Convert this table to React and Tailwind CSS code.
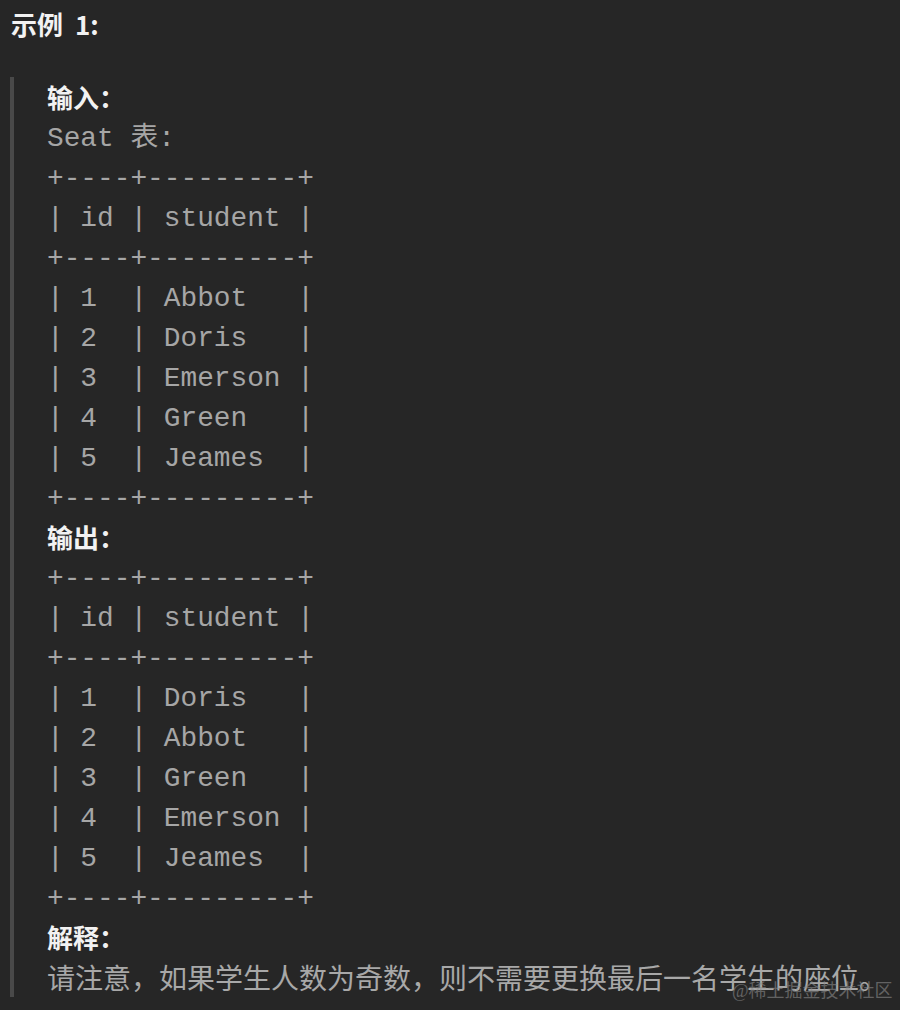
import React from "react";

const input = [
  "+----+---------+",
  "| id | student |",
  "+----+---------+",
  "| 1  | Abbot   |",
  "| 2  | Doris   |",
  "| 3  | Emerson |",
  "| 4  | Green   |",
  "| 5  | Jeames  |",
  "+----+---------+",
];
const output = [
  "+----+---------+",
  "| id | student |",
  "+----+---------+",
  "| 1  | Doris   |",
  "| 2  | Abbot   |",
  "| 3  | Green   |",
  "| 4  | Emerson |",
  "| 5  | Jeames  |",
  "+----+---------+",
];

const mono = "font-['Liberation_Mono','Noto_Sans_CJK_SC',monospace] text-[27.8px] text-[#a6a6a6] whitespace-pre h-10 pt-[3px] leading-[37px]";
const label = "font-['Noto_Sans_CJK_SC',sans-serif] font-bold text-[26px] text-[#f2f2f2] h-10 leading-10";

function Line({ t }) {
  return <div className={mono}>{t}</div>;
}

export default function App() {
  return (
    <div className="relative w-[900px] h-[1010px] bg-[#262626] overflow-hidden">
      <div className="pl-[11px] pt-[5px] h-[77px] font-['Noto_Sans_CJK_SC',sans-serif] font-bold text-[26px] leading-[38px] text-[#f2f2f2]">
        示例<span className="ml-[12px]">1:</span>
      </div>
      <div className="ml-[10px] border-l-4 border-[#494949] pl-[33px] flex flex-col">
        <div className={label}>输入：</div>
        <Line t="Seat 表:" />
        {input.map((l, i) => (
          <Line key={"i" + i} t={l} />
        ))}
        <div className={label}>输出：</div>
        {output.map((l, i) => (
          <Line key={"o" + i} t={l} />
        ))}
        <div className={label}>解释：</div>
        <div className="font-['Noto_Sans_CJK_SC',sans-serif] text-[28px] text-[#a8a8a8] h-10 leading-10 whitespace-nowrap">
          请注意，如果学生人数为奇数，则不需要更换最后一名学生的座位。
        </div>
      </div>
      <div className="absolute left-[732px] top-[980px] font-['Liberation_Serif','Noto_Sans_CJK_SC',serif] text-[18px] leading-[22px] text-[#8a8a8a] opacity-60 whitespace-nowrap">
        @稀土掘金技术社区
      </div>
    </div>
  );
}
